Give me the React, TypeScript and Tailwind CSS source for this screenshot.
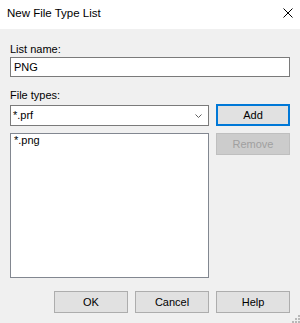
import React from 'react'

const font = { fontFamily: '"Liberation Sans", Arial, sans-serif' }

function Button({
  label,
  focused = false,
  disabled = false,
}: {
  label: string
  focused?: boolean
  disabled?: boolean
}) {
  const base = 'flex h-[22px] w-[74px] items-center justify-center text-[11px] leading-[13px]'
  if (disabled)
    return <div className={`${base} border border-[#bfbfbf] bg-[#cccccc] text-[#a0a0a0]`}>{label}</div>
  if (focused)
    return <div className={`${base} border-2 border-[#0078d7] bg-[#e1e1e1] text-black`}>{label}</div>
  return <div className={`${base} border border-[#adadad] bg-[#e1e1e1] text-black`}>{label}</div>
}

export default function App() {
  return (
    <div className="flex h-[323px] w-[300px] flex-col bg-[#f0f0f0] text-black" style={font}>
      {/* title bar */}
      <div className="flex h-[29px] items-start justify-between bg-white pl-[7px] pr-[7px]">
        <span className="pt-[5px] text-[11.5px] leading-[16px]">New File Type List</span>
        <svg width="10" height="10" viewBox="0 0 10 10" className="mt-[8px]">
          <path d="M0.5 0.5 L9.5 9.5 M9.5 0.5 L0.5 9.5" stroke="#000" strokeWidth="1" />
        </svg>
      </div>

      <div className="relative flex flex-1 flex-col px-[10px] text-[11px] leading-[13px]">
        <div className="mt-[14px]">List name:</div>
        <div className="mt-[1px] flex h-[20px] items-center border border-[#7a7a7a] bg-white pl-[3px]">
          PNG
        </div>

        <div className="mt-[12px]">File types:</div>
        <div className="mt-[2px] flex gap-[7px]">
          <div className="mt-[1px] flex h-[21px] w-[199px] items-center justify-between border border-[#7a7a7a] bg-white pl-[2px] pr-[6px]">
            <span>*.prf</span>
            <svg width="7" height="4" viewBox="0 0 7 4">
              <path d="M0.5 0.5 L3.5 3.5 L6.5 0.5" stroke="#606060" fill="none" strokeWidth="1" />
            </svg>
          </div>
          <Button label="Add" focused />
        </div>

        <div className="mt-[7px] flex gap-[7px]">
          <div className="h-[145px] w-[199px] border border-[#828790] bg-white pl-[3px] leading-[12px]">
            *.png
          </div>
          <Button label="Remove" disabled />
        </div>

        <div className="mt-[13px] flex justify-end gap-[7px]">
          <Button label="OK" />
          <Button label="Cancel" />
          <Button label="Help" />
        </div>

        {/* size grip */}
        <svg width="8" height="8" viewBox="0 0 8 8" className="absolute bottom-0 right-0" fill="#b9b9b9">
          <rect x="6" y="0" width="2" height="2" />
          <rect x="3" y="3" width="2" height="2" />
          <rect x="6" y="3" width="2" height="2" />
          <rect x="0" y="6" width="2" height="2" />
          <rect x="3" y="6" width="2" height="2" />
          <rect x="6" y="6" width="2" height="2" />
        </svg>
      </div>
    </div>
  )
}
